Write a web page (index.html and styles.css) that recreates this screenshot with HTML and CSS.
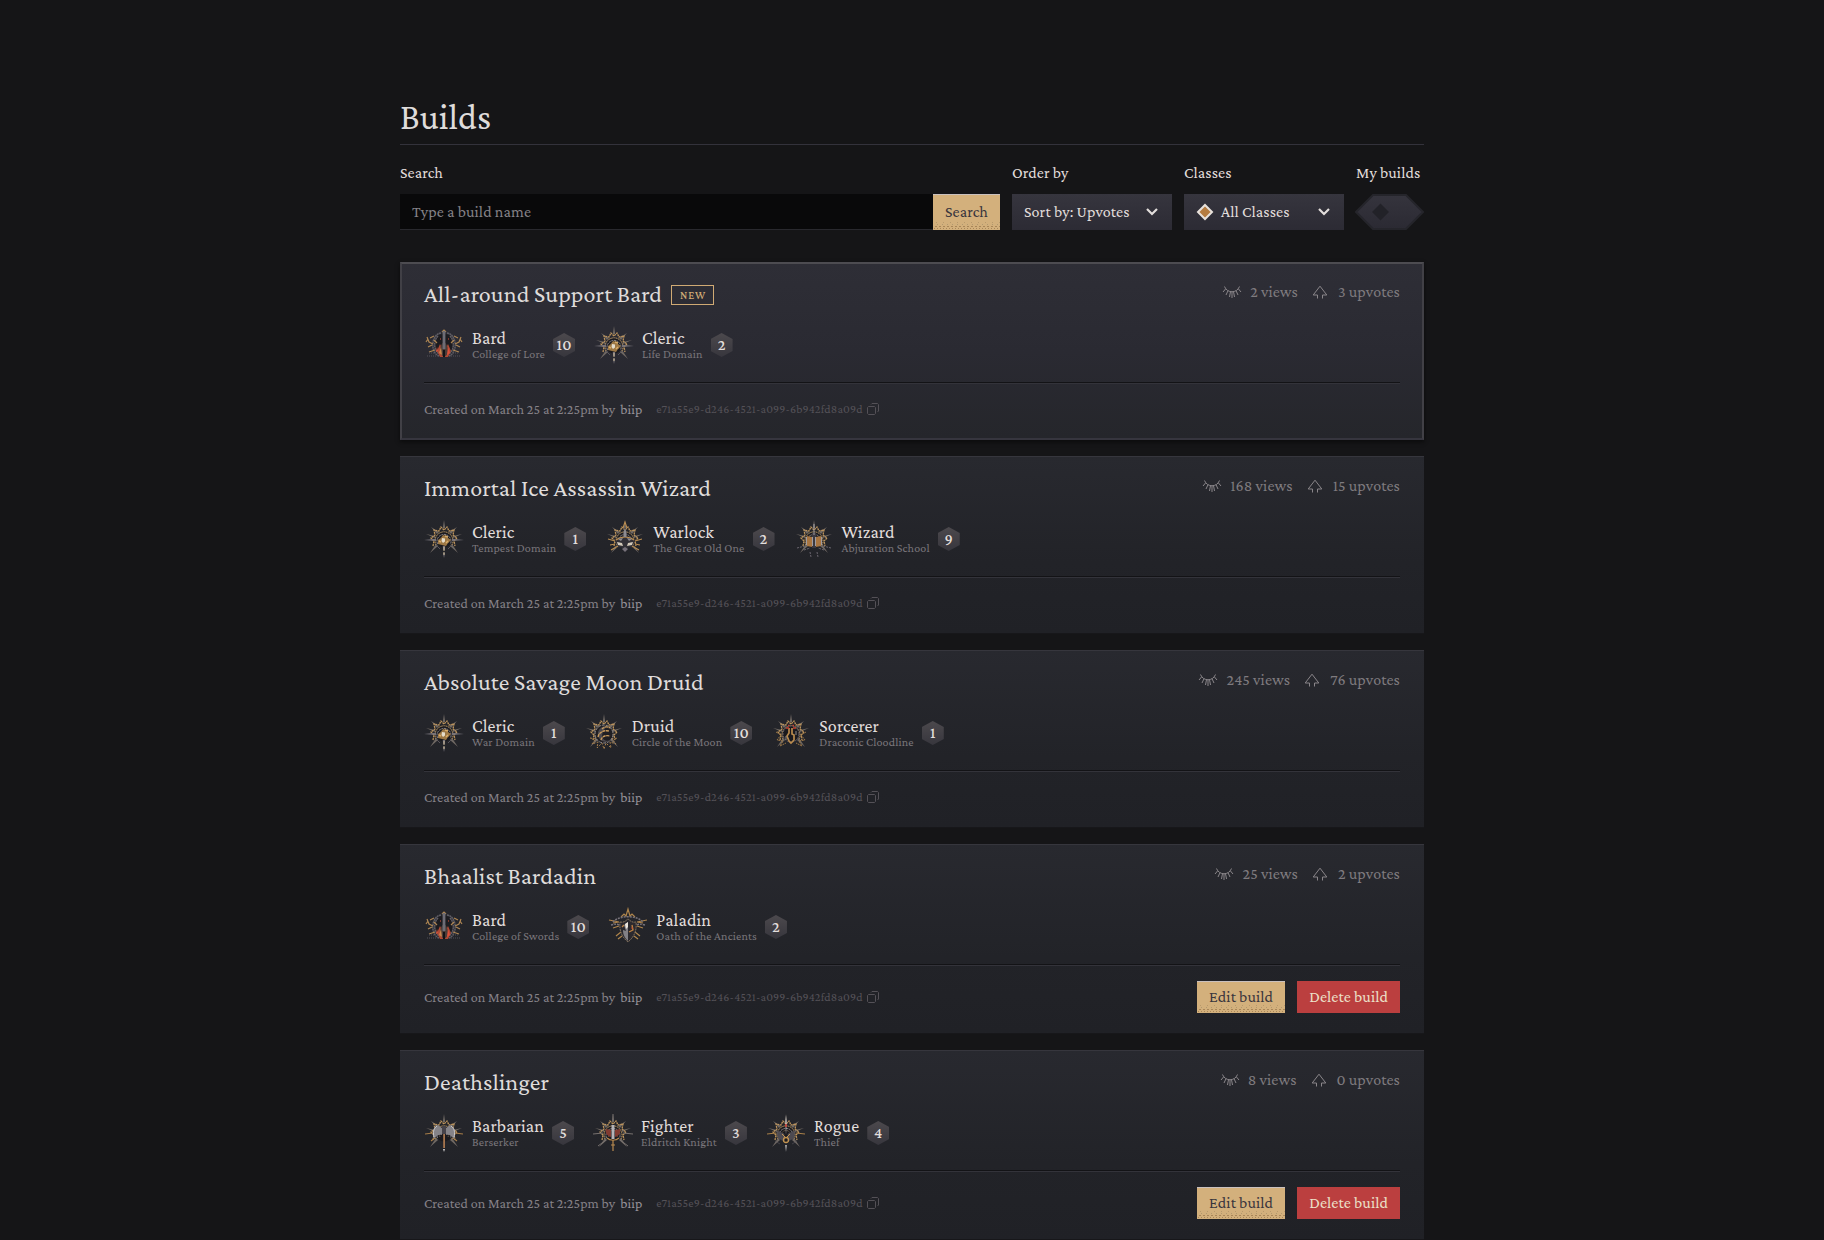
FILE: index.html
```
<!DOCTYPE html>
<html lang="en">
<head>
    <meta charset="UTF-8">
    <meta name="viewport" content="width=device-width, initial-scale=1.0">
    <title>Builds</title>
    <link rel="stylesheet" href="styles.css">
</head>
<body>
    <svg class="sprite" aria-hidden="true">
        <symbol id="views" viewBox="0 0 20 14">
            <path d="M2.500 1.500C5 8.500 15 8.500 17.500 1.500M3.700 3.800L1 7M6 5.700L4 10M8.500 6.600L7.500 12M11.500 6.600l1 5.400M14 5.700l2 4.300M16.300 3.800L19 7M10 7v6" />
        </symbol>
        <symbol id="upvotes" viewBox="0 0 16 14">
            <path d="M5.500 13.500V10H1.200L8 1.200 14.800 10h-4.300v3.500" />
        </symbol>
        <symbol id="copy" viewBox="0 0 12 12">
            <path d="M1.500 3.500h6l1 1v6l-1 1h-6l-1-1v-6zM4 1.500l1-1h5.500l1 1V8l-1 1" />
        </symbol>
        <symbol id="chevron" viewBox="0 0 14 10">
            <path d="M2 2l5 5 5-5" />
        </symbol>

        <!-- spikes and rings shared by most class emblems -->
        <symbol id="burst" viewBox="0 0 40 40">
            <path d="M20 1l1.200 8h-2.400zM7 8l8 5-2 2zM33 8l-8 5 2 2zM2 15l9 2v2zM38 15l-9 2v2zM6 34l6-9 2 2zM34 34l-6-9-2 2z" fill="#6f6863" />
            <path d="M9 27l1-5-3-3 4-3-1-5 5 1 2-4 3 3 3-3 2 4 5-1-1 5 4 3-3 3 1 5" fill="none" stroke="#bb935c" stroke-width="1.300" stroke-dasharray="2 .6" />
            <path d="M12 26a9 9 0 1 1 16 0" fill="none" stroke="#c9a064" stroke-dasharray="1.500 .7" />
            <circle cx="20" cy="21" r="7.500" fill="#1b1a1e" />
            <path d="M13.500 25a7 7 0 1 1 13 0" fill="none" stroke="#8f8b8e" stroke-dasharray="2 .7" />
            <path d="M16 24a4.500 4.500 0 1 1 8 0" fill="none" stroke="#7c6a54" stroke-dasharray="1 .7" />
        </symbol>
        <symbol id="cleric" viewBox="0 0 40 40">
            <use href="#burst" />
            <path d="M0 21l12-1.300v2.200zM40 21l-12-1.300v2.200zM18.800 27h2.400l-.4 4h-1.600zM19 34h2l-1 5z" fill="#77737a" />
            <path d="M14 21l3-2 2-3 4 1 1 2 3 2-3 3-2 3-4-1-4-1z" fill="#9d7845" />
            <path d="M15 22l2 1M21 17l3 1M22 24l2-2" stroke="#d9ac68" stroke-width="1.400" />
            <path d="M18 19l3 .5v3l-2 1.500-1.500-2z" fill="#e4dccb" />
            <path d="M12 26l4 4M28 26l-4 4" stroke="#59555c" />
            <path d="M20 28v4M20 33v3" stroke="#c9b795" />
        </symbol>
        <symbol id="bard" viewBox="0 0 40 40">
            <circle cx="20" cy="20" r="11" fill="#1d1c20" />
            <path d="M17 8C7 9 6 28 15 31M23 8c10 1 11 20 2 23M14 11C9 16 10 26 15 29M26 11c5 5 4 15-1 18" fill="none" stroke="#605e66" stroke-width="1.500" stroke-dasharray="2 .5" />
            <path d="M2 17l2-3M3 12l2 5 4 2M6 13l4-2M8 20l-4 2M38 17l-2-3M37 12l-2 5-4 2M34 13l-4-2M32 20l4 2M10 15l3 3M30 15l-3 3M18 7l2-2 2 2M5 27l6-2M35 27l-6-2" fill="none" stroke="#ad8552" stroke-width="1.200" />
            <path d="M3 31h10M27 31h10M5 28h6M29 28h6" stroke="#535159" stroke-dasharray="1 1" />
            <path d="M16 19l-3 7 3 6h8l3-6-3-7-2 4h-4z" fill="#b04a35" />
            <path d="M18.500 18c-4 5-3 12 1.500 14 5-2 5-9 1.500-14z" fill="#4a3c38" />
            <path d="M17 22l-2 6 3 2z" fill="#c7854c" />
            <path d="M24 22l2 6-3 2zM13 22l1 4-2 1zM16 13l1 1-1 1zM24 13l1 1-1 1z" fill="#dc5039" />
            <path d="M18.600 6h2.800v18h-2.800z" fill="#6d6c75" />
            <path d="M20 25v7" stroke="#141316" stroke-width="2" />
        </symbol>
        <symbol id="warlock" viewBox="0 0 40 40">
            <use href="#burst" />
            <path d="M20 8l2 9 9 4-3 4 2 4-6-1-4 3-4-3-6 1 2-4-3-4 9-4z" fill="#323036" />
            <path d="M11 21c5-4 13-4 18 0M18 9l2-6 2 6M3 20l7 2M37 20l-7 2M6 31l7-4M34 31l-7-4M5 26l5-1M35 26l-5-1" fill="none" stroke="#bb8e52" stroke-width="1.100" />
            <path d="M18.500 13l1.500-4 1.500 4v5h-3zM13 20l5-1-2 3zM27 20l-5-1 2 3z" fill="#8d8b90" />
            <path d="M12 23l5 1 1 3-5-1zM28 23l-5 1-1 3 5-1z" fill="#d4cab9" />
            <path d="M17 30l3-2 3 2-3 3z" fill="#77717a" />
        </symbol>
        <symbol id="wizard" viewBox="0 0 40 40">
            <use href="#burst" />
            <path d="M13 17l5 1v10l-5-1zM27 17l-5 1v10l5-1z" fill="#a87541" />
            <path d="M18 14h4v15h-4z" fill="#3c3940" />
            <path d="M20 5v11M18.500 18v9M21.500 18v9M12.500 18v8M27.500 18v8" stroke="#a09ca0" />
            <path d="M3 29l8-2M37 29l-8-2M10 31l6-2M30 31l-6-2M16 33l1 5M23 33l1 5" stroke="#6c6770" stroke-dasharray="2 1" />
        </symbol>
        <symbol id="druid" viewBox="0 0 40 40">
            <use href="#burst" />
            <path d="M6 25l6 1-4 5 6-2-1 6 5-5 2 6 2-6 5 5-1-6 6 2-4-5 6-1" fill="none" stroke="#a57d4b" stroke-dasharray="2 1.500" />
            <circle cx="20" cy="21" r="9" fill="#201f23" stroke="#8f8a8b" stroke-dasharray="3 1" />
            <path d="M23 13a8 8 0 1 0 4 14c-8 3-13-4-4-14z" fill="#4c494e" />
            <path d="M14 24c1-5 6-7 11-6M17 27c1-4 5-5 9-4M18 16c2-2 5-3 8-1" fill="none" stroke="#c99b5c" stroke-width="1.400" stroke-dasharray="3 .6" />
        </symbol>
        <symbol id="sorcerer" viewBox="0 0 40 40">
            <use href="#burst" />
            <path d="M5 19l5 3-4 5 6 1-3 5 6-3M35 19l-5 3 4 5-6 1 3 5-6-3" fill="none" stroke="#9c7746" stroke-dasharray="2 .7" />
            <circle cx="20" cy="21" r="8" fill="#1b1a1e" stroke="#69636a" stroke-dasharray="2 1" />
            <path d="M18 15v5l-2 3 2 5 2 2 3-3v-5l-2-1v-6" fill="none" stroke="#b98b4e" stroke-width="1.700" />
            <path d="M15 15h3M22 15h3M17 12.500h1.500M21.500 12.500H23" stroke="#c54033" stroke-width="1.300" />
            <path d="M25 18v4M15 23v4" stroke="#908a8b" />
        </symbol>
        <symbol id="paladin" viewBox="0 0 40 40">
            <path d="M1 13l10 2-6 1M5 21l6-2M39 13l-10 2 6 1M35 21l-6-2M13 10l3-3 2 2 2-7 2 7 2-2 3 3M8 29l5-4M32 29l-5-4M10 32l4-3M30 32l-4-3" fill="none" stroke="#ae844b" stroke-width="1.200" />
            <path d="M5 15c6-7 24-7 30 0M3 18c4-1 6-1 8 0M37 18c-4-1-6-1-8 0" fill="none" stroke="#77727a" stroke-width="1.500" stroke-dasharray="2 1" />
            <path d="M12 15c5 1 6-2 8-3 2 1 3 4 8 3 1 9-2 15-8 20-6-5-9-11-8-20z" fill="#2b292e" stroke="#84725d" stroke-dasharray="2 .7" />
            <path d="M20 15v19c-4-4-5-7-5-11l3 1-2-6z" fill="#828085" />
            <path d="M17 17l3-2v5l-2 2z" fill="#ece6dd" />
            <path d="M24 18l1 5-4 2M16 18l-2 2" fill="none" stroke="#c08443" stroke-width="1.300" />
            <path d="M23 21h2" stroke="#b6452f" />
        </symbol>
        <symbol id="barbarian" viewBox="0 0 40 40">
            <use href="#burst" />
            <path d="M1 21l8-1M39 21l-8-1M7 28l4-3M33 28l-4-3" stroke="#a57c48" stroke-width="1.200" />
            <path d="M18 15l-4-3c-6 2-6 9-4 14 2-3 5-5 8-4zM22 15l4-3c6 2 6 9 4 14-2-3-5-5-8-4z" fill="#858388" />
            <path d="M13 13c-4 3-4 7-3 11M27 13c4 3 4 7 3 11" fill="none" stroke="#c9c8ca" />
            <path d="M19.200 14h1.800v21h-1.800z" fill="#a5744d" />
            <path d="M18 13h4v8h-4z" fill="#46434a" />
            <path d="M19 36h2l-1 3z" fill="#d2d0d0" />
        </symbol>
        <symbol id="fighter" viewBox="0 0 40 40">
            <use href="#burst" />
            <path d="M0 21l10-1M40 21l-10-1M20 1v7M5 33l8-6M35 33l-8-6" stroke="#77716f" />
            <path d="M13 16l5 1v7c-4-1-6-4-5-8zM27 16l-5 1v7c4-1 6-4 5-8z" fill="#823b31" />
            <path d="M18.500 12h3v14h-3z" fill="#b5b3b6" />
            <path d="M14 25c3 3 9 3 12 0M20 27v11M18 32h4" fill="none" stroke="#b98a4f" stroke-width="1.200" />
        </symbol>
        <symbol id="rogue" viewBox="0 0 40 40">
            <use href="#burst" />
            <path d="M1 21l9-1M39 21l-9-1" stroke="#a98049" />
            <path d="M11 18l7 3v7l-6-3zM29 18l-7 3v7l6-3zM9 28l5 3M31 28l-5 3" fill="#4d4a51" stroke="#59555c" stroke-width=".6" />
            <path d="M19.300 10l.7-8 .7 8-.7 12zM19.200 32h1.600L20 39z" fill="#c6c4c5" />
            <path d="M20 11v3" stroke="#c73b32" stroke-width="1.600" />
            <circle cx="20" cy="27" r="2.500" fill="none" stroke="#c49450" stroke-width="1.300" />
            <path d="M16 21l4 4 4-4" fill="none" stroke="#c49450" />
        </symbol>
    </svg>

    <main class="container">
        <h1>Builds</h1>

        <form class="filters">
            <div class="field field-search">
                <label for="search">Search</label>
                <div class="search-bar">
                    <input type="text" id="search" placeholder="Type a build name">
                    <button type="button" class="btn btn-gold">Search</button>
                </div>
            </div>
            <div class="field field-select">
                <span class="label">Order by</span>
                <div class="select"><span>Sort by: Upvotes</span><svg class="chevron"><use href="#chevron" /></svg></div>
            </div>
            <div class="field field-select">
                <span class="label">Classes</span>
                <div class="select">
                    <svg class="gem" viewBox="0 0 18 18"><path d="M9 2l7 7-7 7-7-7z" /></svg>
                    <span class="all-classes">All Classes</span><svg class="chevron"><use href="#chevron" /></svg>
                </div>
            </div>
            <div class="field field-toggle">
                <span class="label">My builds</span>
                <svg class="toggle" viewBox="0 0 69 36">
                    <defs>
                        <linearGradient id="toggleFill" x2="0" y2="1">
                            <stop stop-color="#35343d" /><stop offset="1" stop-color="#2b2a33" />
                        </linearGradient>
                    </defs>
                    <path class="toggle-track" d="M18 1h33l17 17-17 17H18L1 18z" />
                    <path class="toggle-thumb" d="M25.500 9.500l8.500 8.500-8.500 8.500-8.500-8.500z" />
                </svg>
            </div>
        </form>

        <div id="buildList" class="build-list"></div>
    </main>

    <script>
        const builds = [
            {
                name: "All-around Support Bard", views: 2, upvotes: 3, isNew: true,
                classes: [["Bard", "College of Lore", 10], ["Cleric", "Life Domain", 2]]
            },
            {
                name: "Immortal Ice Assassin Wizard", views: 168, upvotes: 15,
                classes: [["Cleric", "Tempest Domain", 1], ["Warlock", "The Great Old One", 2], ["Wizard", "Abjuration School", 9]]
            },
            {
                name: "Absolute Savage Moon Druid", views: 245, upvotes: 76,
                classes: [["Cleric", "War Domain", 1], ["Druid", "Circle of the Moon", 10], ["Sorcerer", "Draconic Cloodline", 1]]
            },
            {
                name: "Bhaalist Bardadin", views: 25, upvotes: 2, mine: true,
                classes: [["Bard", "College of Swords", 10], ["Paladin", "Oath of the Ancients", 2]]
            },
            {
                name: "Deathslinger", views: 8, upvotes: 0, mine: true,
                classes: [["Barbarian", "Berserker", 5], ["Fighter", "Eldritch Knight", 3], ["Rogue", "Thief", 4]]
            }
        ];

        function classItem([name, subclass, level]) {
            return `
                <li class="class-item">
                    <svg class="emblem"><use href="#${name.toLowerCase()}" /></svg>
                    <div class="class-text">
                        <span class="class-name">${name}</span>
                        <span class="subclass">${subclass}</span>
                    </div>
                    <span class="level">${level}</span>
                </li>`;
        }

        function buildCard(build) {
            return `
                <article class="card ${build.isNew ? "card-new" : ""}">
                    <header class="card-header">
                        <h2>${build.name}</h2>
                        ${build.isNew ? '<span class="badge">NEW</span>' : ""}
                        <div class="stats">
                            <svg class="icon-views"><use href="#views" /></svg><span>${build.views} views</span>
                            <svg class="icon-upvotes"><use href="#upvotes" /></svg><span>${build.upvotes} upvotes</span>
                        </div>
                    </header>
                    <ul class="classes">${build.classes.map(classItem).join("")}</ul>
                    <footer class="card-footer">
                        <span class="created">Created on March 25 at 2:25pm by</span>
                        <span class="author">biip</span>
                        <span class="build-id">e71a55e9-d246-4521-a099-6b942fd8a09d</span>
                        <svg class="icon-copy"><use href="#copy" /></svg>
                        ${build.mine ? `
                        <div class="actions">
                            <button class="btn btn-gold">Edit build</button>
                            <button class="btn btn-red">Delete build</button>
                        </div>` : ""}
                    </footer>
                </article>`;
        }

        document.getElementById("buildList").innerHTML = builds.map(buildCard).join("");
    </script>
</body>
</html>
```
FILE: styles.css
```
* {
    box-sizing: border-box;
}

body {
    margin: 0;
    height: 1240px;
    overflow: hidden;
    background-color: #151517;
    color: #e2dedc;
    font-family: 'Crimson Pro', 'Liberation Serif', serif;
    font-size: 16px;
    line-height: 20px;
    letter-spacing: 0.1px;
}

.sprite {
    display: none;
}

.container {
    width: 1024px;
    margin: 0 auto;
    padding-top: 95px;
}

h1 {
    margin: 0 0 18px;
    height: 50px;
    border-bottom: 1px solid #33323b;
    font-size: 36px;
    font-weight: normal;
    line-height: 44px;
}

h1, h2 {
    color: #dfdcdb;
}

/* filters */
.filters {
    display: flex;
    gap: 12px;
    margin-bottom: 32px;
}

.field {
    display: flex;
    flex-direction: column;
    gap: 11px;
}

.field-search {
    flex: 1;
}

.field-select {
    width: 160px;
}

.field-toggle {
    width: 68px;
    white-space: nowrap;
}

.search-bar {
    display: flex;
    height: 36px;
}

.search-bar input {
    flex: 1;
    padding: 0 12px;
    border: none;
    border-bottom: 1px solid #29292e;
    background-color: #09090a;
    color: #e2dedc;
    font: inherit;
    letter-spacing: inherit;
}

.search-bar input::placeholder {
    color: #858287;
}

.btn {
    height: 32px;
    padding: 0 12px 1px;
    border: none;
    font: inherit;
    letter-spacing: inherit;
    white-space: nowrap;
}

.search-bar .btn {
    width: 67px;
    height: 36px;
}

/* staggered rows of dots along the bottom edge */
.btn-gold {
    border-top: 1px solid #c9c0be;
    background-color: #d3b07c;
    background-image:
        radial-gradient(circle, #a98658 0.5px, transparent 0.9px),
        radial-gradient(circle, #a98658 0.5px, transparent 0.9px),
        radial-gradient(circle, #b0986f 0.5px, transparent 0.9px),
        radial-gradient(circle, #b8996b 0.5px, transparent 0.9px);
    background-size: 3px 3px, 4px 3px, 5px 3px, 7px 3px;
    background-position: 0 100%, 1px calc(100% - 2px), 2px calc(100% - 4px), 0 calc(100% - 6px);
    background-repeat: repeat-x;
    color: #39353c;
}

.btn-red {
    background-color: #bb3f3f;
    color: #ece0c9;
}

.select {
    display: flex;
    align-items: center;
    height: 36px;
    padding: 0 13px 0 12px;
    background: linear-gradient(#36353e, #2c2b34);
    white-space: nowrap;
}

.chevron {
    width: 14px;
    height: 10px;
    margin-left: auto;
    fill: none;
    stroke: #e2dedc;
    stroke-width: 2.2;
}

.gem {
    width: 18px;
    height: 18px;
    margin-right: 7px;
    fill: #b57c40;
    stroke: #e8e2dc;
    stroke-width: 2;
}

.toggle {
    width: 69px;
    height: 36px;
    margin-left: -1px;
}

.toggle-track {
    fill: url(#toggleFill);
    stroke: #25252b;
    stroke-width: 2;
}

.toggle-thumb {
    fill: #222228;
}

/* build cards */
.build-list {
    display: flex;
    flex-direction: column;
    gap: 16px;
}

.card {
    padding: 18px 24px 20px;
    border-top: 1px solid #36363d;
    border-bottom: 1px solid #17171a;
    background: linear-gradient(#28292f, #222328 60%, #202126);
}

.card-new {
    padding: 17px 22px 19px;
    border: 2px solid;
    border-color: #4d4c51 #414046 #36353e;
    background: linear-gradient(#2e2e36, #2a2a32 50%, #25262b);
    box-shadow: 0 2px 4px #0b0b0c;
}

.card-header {
    display: flex;
    align-items: center;
    height: 26px;
}

h2 {
    margin: 0;
    font-size: 24px;
    font-weight: normal;
    line-height: 26px;
}

.badge {
    height: 20px;
    margin: 1px 0 0 9px;
    padding: 0 7px 0 8px;
    border: 1px solid #d0aa74;
    color: #d0aa74;
    font-size: 11px;
    font-weight: 500;
    line-height: 19px;
    letter-spacing: 0.8px;
}

.stats {
    display: flex;
    align-items: center;
    align-self: flex-start;
    height: 21px;
    margin-left: auto;
    color: #7f7b7f;
}

.stats svg {
    fill: none;
    stroke: #8a868a;
}

.icon-views {
    width: 20px;
    height: 14px;
    margin-right: 8px;
}

.icon-upvotes {
    width: 16px;
    height: 14px;
    margin: 0 10px 0 14px;
}

.classes {
    display: flex;
    gap: 19px;
    height: 76px;
    margin: 0;
    padding: 18px 0 17px;
    border-bottom: 1px solid #131316;
    box-shadow: 0 1px #33333a;
    list-style: none;
}

.class-item {
    display: flex;
    align-items: center;
    gap: 8px;
    height: 40px;
}

.emblem {
    width: 40px;
    height: 40px;
}

.class-text {
    display: flex;
    flex-direction: column;
}

.class-name {
    font-size: 18px;
    line-height: 18px;
}

.subclass {
    color: #7a767b;
    font-size: 12px;
    line-height: 14px;
    letter-spacing: 0.15px;
}

.level {
    width: 22px;
    height: 24px;
    background: linear-gradient(#4c494d, #37363d);
    clip-path: polygon(50% 0, 100% 25%, 100% 75%, 50% 100%, 0 75%, 0 25%);
    font-size: 16px;
    font-weight: 500;
    line-height: 23px;
    text-align: center;
}

.card-footer {
    display: flex;
    align-items: center;
    min-height: 20px;
    margin-top: 16px;
    color: #858187;
    font-size: 14px;
    letter-spacing: 0.05px;
}

.author {
    margin-left: 5px;
    color: #96939a;
}

.build-id {
    margin-left: 14px;
    color: #545157;
    font-size: 12px;
    letter-spacing: 0.15px;
}

.icon-copy {
    width: 12px;
    height: 12px;
    margin-left: 4px;
    fill: none;
    stroke: #545157;
}

.actions {
    display: flex;
    gap: 12px;
    margin-left: auto;
    font-size: 16px;
    letter-spacing: 0.1px;
}
```
